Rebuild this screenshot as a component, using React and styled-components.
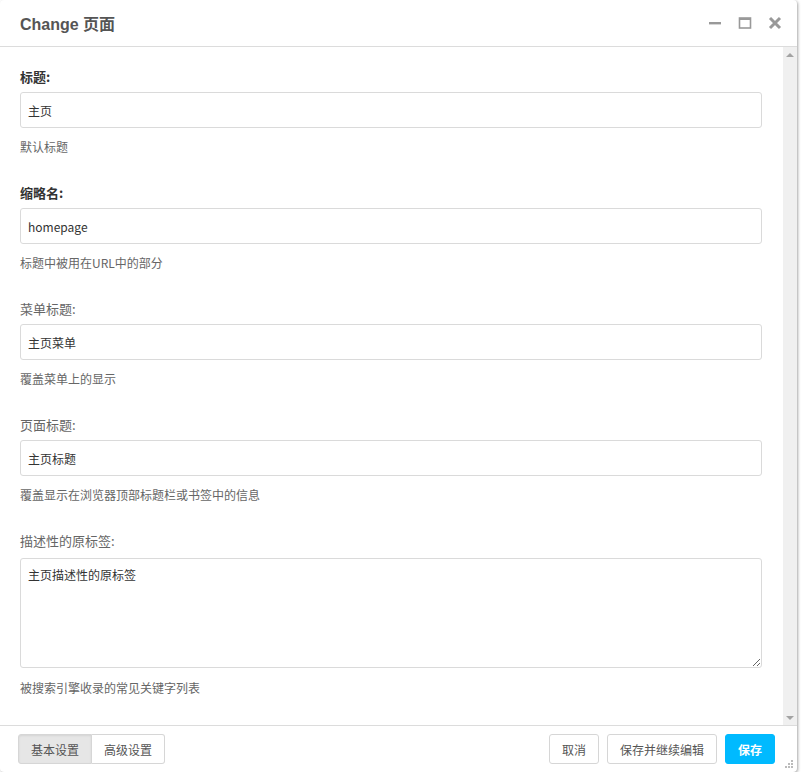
import React from "react";
import styled, { createGlobalStyle } from "styled-components";

const Global = createGlobalStyle`
  html, body { margin: 0; padding: 0; background: #fff; }
  body { font-family: "Noto Sans CJK SC", "Noto Sans", sans-serif; }
  * { box-sizing: border-box; }
`;

const Dialog = styled.div`
  width: 797px;
  height: 772px;
  background: #fff;
  border-radius: 4px;
  box-shadow: 1px 1px 3px rgba(0, 0, 0, 0.35);
  display: flex;
  flex-direction: column;
  overflow: hidden;
  position: relative;
`;

const Header = styled.div`
  height: 47px;
  flex: none;
  border-bottom: 1px solid #dcdcdc;
  display: flex;
  align-items: center;
  padding: 0 15px 0 20px;
`;

const Title = styled.h1`
  margin: 0;
  flex: 1;
  font-family: "Liberation Sans", "Noto Sans CJK SC", sans-serif;
  font-size: 16px;
  font-weight: bold;
  color: #555;
`;

const Tools = styled.div`
  display: flex;
  align-items: center;
  gap: 16px;
`;

const Tool = styled.svg`
  width: 14px;
  height: 14px;
  display: block;
`;

const Body = styled.div`
  flex: 1;
  display: flex;
  min-height: 0;
  border-bottom: 1px solid #dcdcdc;
`;

const Content = styled.div`
  flex: 1;
  padding: 20px 21px 0 20px;
`;

const Field = styled.div`
  display: flex;
  flex-direction: column;
  margin-bottom: 26px;
`;

const Label = styled.label`
  font-size: 13px;
  line-height: 20px;
  font-weight: ${(p) => (p.$strong ? "bold" : "normal")};
  color: ${(p) => (p.$strong ? "#333" : "#666")};
  margin-bottom: ${(p) => (p.$area ? "7px" : "5px")};
`;

const Input = styled.input`
  height: 36px;
  width: 100%;
  border: 1px solid #dadada;
  border-radius: 3px;
  padding: 0 7px;
  font-family: "Noto Sans CJK SC", "Noto Sans", sans-serif;
  font-size: 12px;
  color: #333;
  outline: none;
`;

const Area = styled.textarea`
  height: 110px;
  width: 100%;
  border: 1px solid #dadada;
  border-radius: 3px;
  padding: 6px 7px;
  font-family: "Noto Sans CJK SC", "Noto Sans", sans-serif;
  font-size: 12px;
  line-height: 20px;
  color: #333;
  outline: none;
  resize: vertical;
  display: block;
`;

const Help = styled.div`
  font-size: 12px;
  line-height: 20px;
  color: #666;
  margin-top: ${(p) => (p.$area ? "10px" : "9px")};
`;

const Scrollbar = styled.div`
  width: 14px;
  flex: none;
  background: #f0f0f0;
  display: flex;
  flex-direction: column;
  justify-content: space-between;
  align-items: center;
  padding: 6px 0 5px;
`;

const Arrow = styled.div`
  width: 0;
  height: 0;
  border-left: 4px solid transparent;
  border-right: 4px solid transparent;
  ${(p) =>
    p.$down
      ? "border-top: 4px solid #a3a3a3;"
      : "border-bottom: 4px solid #a3a3a3;"}
`;

const Footer = styled.div`
  height: 46px;
  flex: none;
  display: flex;
  align-items: center;
  justify-content: space-between;
  padding: 0 22px 0 18px;
`;

const Group = styled.div`
  display: flex;
`;

const Button = styled.button`
  height: 30px;
  padding: 0 12px;
  font-family: "Noto Sans CJK SC", "Noto Sans", sans-serif;
  font-size: 12px;
  color: #555;
  background: #fff;
  border: 1px solid #d6d6d6;
  border-radius: 3px;
  cursor: pointer;
`;

const TabButton = styled(Button)`
  background: ${(p) => (p.$active ? "#e6e6e6" : "#fff")};
  box-shadow: ${(p) => (p.$active ? "inset 0 1px 2px rgba(0,0,0,0.08)" : "none")};
  border-radius: ${(p) => (p.$first ? "3px 0 0 3px" : "0 3px 3px 0")};
  border-left-width: ${(p) => (p.$first ? "1px" : "0")};
  padding: 0 12px;
`;

const Actions = styled.div`
  display: flex;
  gap: 8px;
`;

const Primary = styled(Button)`
  background: #00baff;
  border-color: #00baff;
  color: #fff;
  font-weight: bold;
`;

const Grip = styled.svg`
  position: absolute;
  right: 3px;
  bottom: 3px;
  width: 10px;
  height: 10px;
`;

const fields = [
  { label: "标题:", strong: true, value: "主页", help: "默认标题" },
  { label: "缩略名:", strong: true, value: "homepage", help: "标题中被用在URL中的部分" },
  { label: "菜单标题:", value: "主页菜单", help: "覆盖菜单上的显示" },
  { label: "页面标题:", value: "主页标题", help: "覆盖显示在浏览器顶部标题栏或书签中的信息" },
];

export default function App() {
  return (
    <>
      <Global />
      <Dialog>
        <Header>
          <Title>Change 页面</Title>
          <Tools>
            <Tool viewBox="0 0 14 14">
              <rect x="1" y="6" width="12" height="2.4" fill="#999" />
            </Tool>
            <Tool viewBox="0 0 14 14">
              <rect x="1.5" y="2" width="11" height="10" fill="none" stroke="#999" strokeWidth="1.6" />
              <rect x="1.5" y="2" width="11" height="2" fill="#999" />
            </Tool>
            <Tool viewBox="0 0 14 14">
              <path d="M2 2 L12 12 M12 2 L2 12" stroke="#999" strokeWidth="3" />
            </Tool>
          </Tools>
        </Header>
        <Body>
          <Content>
            {fields.map((f) => (
              <Field key={f.label}>
                <Label $strong={f.strong}>{f.label}</Label>
                <Input defaultValue={f.value} />
                <Help>{f.help}</Help>
              </Field>
            ))}
            <Field>
              <Label $area>描述性的原标签:</Label>
              <Area defaultValue="主页描述性的原标签" />
              <Help $area>被搜索引擎收录的常见关键字列表</Help>
            </Field>
          </Content>
          <Scrollbar>
            <Arrow />
            <Arrow $down />
          </Scrollbar>
        </Body>
        <Footer>
          <Group>
            <TabButton $active $first>基本设置</TabButton>
            <TabButton>高级设置</TabButton>
          </Group>
          <Actions>
            <Button>取消</Button>
            <Button>保存并继续编辑</Button>
            <Primary>保存</Primary>
          </Actions>
        </Footer>
        <Grip viewBox="0 0 10 10">
          <rect x="7" y="1" width="2" height="2" fill="#bbb" />
          <rect x="4" y="4" width="2" height="2" fill="#bbb" />
          <rect x="7" y="4" width="2" height="2" fill="#bbb" />
          <rect x="1" y="7" width="2" height="2" fill="#bbb" />
          <rect x="4" y="7" width="2" height="2" fill="#bbb" />
          <rect x="7" y="7" width="2" height="2" fill="#bbb" />
        </Grip>
      </Dialog>
    </>
  );
}
